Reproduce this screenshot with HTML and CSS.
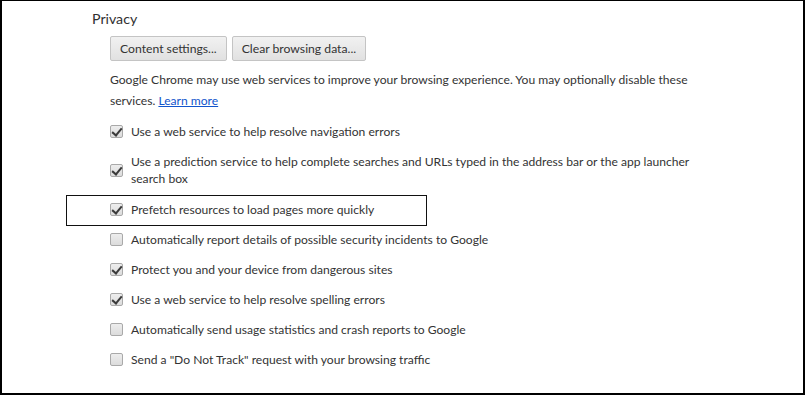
FILE: index.html
```html
<!DOCTYPE html>
<html>
<head>
<meta charset="utf-8">
<link rel="stylesheet" href="styles.css">
</head>
<body>
<div class="frame">
  <section class="privacy">
    <h3 class="title">Privacy</h3>
    <div class="content">
      <div class="buttons">
        <button class="btn">Content settings...</button>
        <button class="btn">Clear browsing data...</button>
      </div>
      <p class="desc">Google Chrome may use web services to improve your browsing experience. You may optionally disable these services. <a class="link" href="#">Learn more</a></p>
      <ul class="options">
        <li class="opt"><span class="cb on"></span><span class="label">Use a web service to help resolve navigation errors</span></li>
        <li class="opt two"><span class="cb on"></span><span class="label">Use a prediction service to help complete searches and URLs typed in the address bar or the app launcher search box</span></li>
        <li class="opt marked"><span class="cb on"></span><span class="label">Prefetch resources to load pages more quickly</span></li>
        <li class="opt"><span class="cb"></span><span class="label">Automatically report details of possible security incidents to Google</span></li>
        <li class="opt"><span class="cb on"></span><span class="label">Protect you and your device from dangerous sites</span></li>
        <li class="opt"><span class="cb on"></span><span class="label">Use a web service to help resolve spelling errors</span></li>
        <li class="opt"><span class="cb"></span><span class="label">Automatically send usage statistics and crash reports to Google</span></li>
        <li class="opt"><span class="cb"></span><span class="label">Send a "Do Not Track" request with your browsing traffic</span></li>
      </ul>
    </div>
  </section>
</div>
</body>
</html>
```
FILE: styles.css
```css
* { box-sizing: border-box; }
html, body { margin: 0; padding: 0; background: #fff; }
body {
  font-family: "Lato", "Open Sans", sans-serif;
  color: #333;
}
.frame {
  width: 805px;
  height: 395px;
  border-style: solid;
  border-color: #000;
  border-width: 1px 2px 2px 2px;
  overflow: hidden;
}
.privacy {
  padding: 8px 0 0 90px;
}
.title {
  margin: 0;
  font-weight: 400;
  font-size: 14.2px;
  line-height: 20px;
  color: #303030;
}
.content {
  padding-left: 18px;
  width: 610px;
}
.buttons {
  display: flex;
  gap: 5px;
  margin-top: 7px;
}
.btn {
  font-family: inherit;
  font-size: 12.2px;
  color: #333;
  height: 25px;
  padding: 0 9px;
  border: 1px solid #c4c4c4;
  border-radius: 2px;
  background: linear-gradient(#f1f1f1, #e1e1e1);
  line-height: 22px;
}
.desc {
  margin: 8px 0 0;
  font-size: 12.1px;
  line-height: 21px;
}
.link { color: #15c; text-decoration: underline; }
.options {
  list-style: none;
  margin: 5px 0 0;
  padding: 0;
}
.opt {
  display: flex;
  align-items: center;
  gap: 8px;
  min-height: 30px;
  font-size: 12.1px;
  line-height: 17px;
  position: relative;
}
.opt.two { min-height: 48px; }
.label { width: 570px; }
.cb {
  flex: none;
  width: 13px;
  height: 13px;
  border: 1px solid #a9a9a9;
  border-radius: 2px;
  background: linear-gradient(#ededed, #dcdcdc);
  position: relative;
}
.cb.on::after {
  content: "";
  position: absolute;
  left: 3px;
  top: 0px;
  width: 4px;
  height: 8px;
  border-right: 2.5px solid #3a3a3a;
  border-bottom: 2.5px solid #3a3a3a;
  transform: rotate(40deg);
}
.opt.marked::before {
  content: "";
  position: absolute;
  left: -44px;
  top: 1px;
  width: 359px;
  height: 29px;
  border: 1px solid #111;
}
```
